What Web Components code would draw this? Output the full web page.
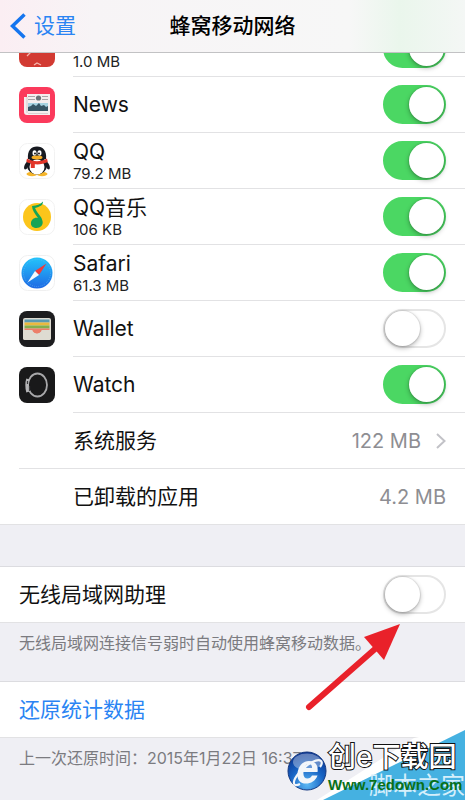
<!DOCTYPE html>
<html lang="zh-CN">
<head>
<meta charset="utf-8">
<meta name="viewport" content="width=device-width, initial-scale=1">
<title>蜂窝移动网络</title>
<style>
  html, body { margin: 0; height: 100%; }
  body {
    background: #efeff4;
    color: #111;
    font-family: Inter, "Noto Sans CJK SC", sans-serif;
    overflow: hidden;
  }
</style>
</head>
<body>
<settings-page></settings-page>

<script>
const ICONS = {
  red: `<rect width="36" height="36" rx="8" fill="#d23a32"/>
    <path d="M8 25l6-6M15 34l3-2 4 2" fill="none" stroke="#f6b5ac" stroke-width="1.3"/>`,
  news: `<rect width="36" height="36" rx="8" fill="#fb3a5c"/>
    <path d="M5 10h3V7h23v21H8c-2 0-3-1-3-3z" fill="#f4eeee"/>
    <path d="M8 10v16" stroke="#d8c9cd"/>
    <path d="M9 9.500h7M9 12.500h7M23 9.500h6M23 12.500h6" stroke="#a9a4a6"/>
    <circle cx="19.500" cy="11" r="2.600" fill="#6c7377"/>
    <rect x="9" y="16" width="20" height="8" fill="#a5d2e0"/>
    <path d="M9 24v-4l3-1 2-2 3 2 3-3 2 3 3-1 2 2 2-1v5z" fill="#365564"/>
    <path d="M9 26.500h20" stroke="#d8cfd1"/>`,
  qq: `<rect x=".5" y=".5" width="35" height="35" rx="8" fill="#fff" stroke="#f2f2f2"/>
    <ellipse cx="13" cy="31" rx="5.500" ry="2.200" fill="#f5b52b"/>
    <ellipse cx="23" cy="31" rx="5.500" ry="2.200" fill="#f5b52b"/>
    <path d="M9.500 17C4 22 4 28 7.500 26l3-4zM26.500 17C32 22 32 28 28.500 26l-3-4z" fill="#171a20"/>
    <ellipse cx="18" cy="22.500" rx="10" ry="9" fill="#171a20"/>
    <ellipse cx="18" cy="24" rx="7.500" ry="7.500" fill="#fff"/>
    <path d="M9 16C8 8 12 3.500 18 3.500S28 8 27 16z" fill="#171a20"/>
    <ellipse cx="15.500" cy="10" rx="2" ry="2.800" fill="#fff"/>
    <ellipse cx="20.500" cy="10" rx="2" ry="2.800" fill="#fff"/>
    <circle cx="16" cy="10.500" r=".9"/><circle cx="20" cy="10.500" r=".9"/>
    <ellipse cx="18" cy="14.500" rx="5.500" ry="1.900" fill="#f5ad24"/>
    <path d="M8 15.500c6 3.500 14 3.500 20 0l.8 3.500c-4 2-9 2.800-13 2.300V25h-4v-4.500C10 20 8 19.500 7.300 18.500z" fill="#e23629"/>`,
  music: `<rect x=".5" y=".5" width="35" height="35" rx="8" fill="#fff" stroke="#f2f2f2"/>
    <circle cx="18" cy="18" r="14" fill="#fcc51b"/>
    <path d="M24 2.500c0 4-3 5-8 6.500 1 3 4 6 6.500 10l1 3c1 4-2 7-6 7s-6-2.500-5.500-5.500S15.500 18 19 19c-3-4-6-8-6-12 5-.5 8-1.500 11-4.500z" fill="#13a456"/>`,
  safari: `<defs><linearGradient id="sea" x1="0" y1="0" x2="0" y2="1"><stop stop-color="#24c4fb"/><stop offset="1" stop-color="#1e69e4"/></linearGradient></defs>
    <rect x=".5" y=".5" width="35" height="35" rx="8" fill="#fff" stroke="#f0f0f0"/>
    <circle cx="18" cy="18" r="15.500" fill="url(#sea)"/>
    <circle cx="18" cy="18" r="13.500" fill="none" stroke="#6fc0f8" stroke-width="1" stroke-dasharray=".5 1.600"/>
    <path d="M27.500 8.500L16 16l4 4z" fill="#ef3b3b"/>
    <path d="M8.500 27.500L16 16l4 4z" fill="#f6f8fb"/>`,
  wallet: `<rect width="36" height="36" rx="8" fill="#1d1d1f"/>
    <rect x="4" y="7" width="28" height="22" rx="2" fill="#dedbd1"/>
    <path d="M5.500 10h25" stroke="#5a9ab2" stroke-width="3"/>
    <path d="M5.500 13h25" stroke="#eab93e" stroke-width="3"/>
    <path d="M5.500 16h25" stroke="#83b04c" stroke-width="3"/>
    <path d="M5.500 17.500h25v2h-7c-2 0-2 3.500-5.500 3.500s-3.500-3.500-5.500-3.500h-7z" fill="#ec7f6a"/>
    <path d="M4 19h8.500c2 0 2 3.500 5.500 3.500s3.500-3.500 5.500-3.500H32v8c0 1-1 2-2 2H6c-1 0-2-1-2-2z" fill="#dedbd1"/>
    <path d="M13.500 19.500h9c-1 3.500-8 3.500-9 0z" fill="#ec7f6a"/>`,
  watch: `<rect width="36" height="36" rx="8" fill="#19191a"/>
    <ellipse cx="18.500" cy="18" rx="9.500" ry="11.500" fill="none" stroke="#a8a8aa" stroke-width="1.800"/>
    <path d="M9 12c-1 3-1 9 0 13" fill="none" stroke="#b5b5b7" stroke-width="3.500"/>
    <path d="M8.500 14v3M10.500 19v5" stroke="#3a3a3c" stroke-width="1.200"/>`
};

class AppIcon extends HTMLElement {
  constructor() {
    super();
    this.attachShadow({ mode: 'open' });
  }

  connectedCallback() {
    this.shadowRoot.innerHTML = `
      <style>
        :host { display: block; width: 36px; height: 36px; }
        svg { display: block; }
      </style>
      <svg width="36" height="36" viewBox="0 0 36 36" aria-hidden="true">${ICONS[this.getAttribute('name')]}</svg>
    `;
  }
}
customElements.define('app-icon', AppIcon);

class NavHeader extends HTMLElement {
  constructor() {
    super();
    this.attachShadow({ mode: 'open' });
  }

  connectedCallback() {
    this.shadowRoot.innerHTML = `
      <style>
        :host {
          display: grid;
          grid-template-columns: 1fr auto 1fr;
          align-items: center;
          box-sizing: border-box;
          height: 53px;
          padding: 0 10px;
          position: relative;
          z-index: 1;
          border-bottom: 1px solid #c2c2c4;
          background: linear-gradient(90deg, #fbeef3 0, #f7f4f6 20%, #f7f7f7 75%, #eaf6ec 86%, #f4f7f5 100%);
        }
        a {
          display: flex;
          align-items: center;
          gap: 8px;
          color: #2a84f3;
          font-size: 21px;
          line-height: 28px;
          text-decoration: none;
        }
        h1 { margin: 0; font-size: 21px; line-height: 28px; font-weight: 500; color: #000; }
      </style>
      <a href="#"><svg width="16" height="26" viewBox="0 0 16 26" aria-hidden="true"><path d="M14.500 1.500L2.500 13l12 11.500" fill="none" stroke="#1575ef" stroke-width="3.500"/></svg><slot name="back"></slot></a>
      <h1><slot></slot></h1>
    `;
  }
}
customElements.define('nav-header', NavHeader);

class SettingsGroup extends HTMLElement {
  constructor() {
    super();
    this.attachShadow({ mode: 'open' });
  }

  connectedCallback() {
    this.shadowRoot.innerHTML = `
      <style>
        :host { display: block; }
        .rows { background: #fff; box-shadow: 0 -1px #dcdce0; }
        ::slotted(p) {
          margin: 0;
          padding: 8px 19px 27px;
          font-size: 16px;
          line-height: 24px;
          color: #7b7b80;
          white-space: nowrap;
        }
      </style>
      <div class="rows"><slot></slot></div>
      <slot name="note"></slot>
    `;
  }
}
customElements.define('settings-group', SettingsGroup);

class SettingsRow extends HTMLElement {
  constructor() {
    super();
    this.attachShadow({ mode: 'open' });
  }

  // kind: toggle | value | link | action
  control() {
    const kind = this.getAttribute('kind') || 'toggle';
    if (kind === 'toggle') {
      return `<input id="sw" type="checkbox" role="switch" ${this.hasAttribute('on') ? 'checked' : ''}>`;
    }
    if (kind === 'action') return '';
    const arrow = kind === 'link'
      ? `<svg width="10" height="16" viewBox="0 0 10 16" aria-hidden="true"><path d="M1 1l7.500 7L1 15" fill="none" stroke="#c2c2c7" stroke-width="2"/></svg>`
      : '';
    return `<span class="value">${this.getAttribute('value')}${arrow}</span>`;
  }

  text() {
    const kind = this.getAttribute('kind') || 'toggle';
    const sub = this.getAttribute('sub');
    const inner = `<span class="name"><slot></slot></span>${sub ? `<span class="sub">${sub}</span>` : ''}`;
    if (kind === 'toggle') return `<label class="text" for="sw">${inner}</label>`;
    if (kind === 'action') return `<button class="text">${inner}</button>`;
    if (kind === 'link') return `<a class="text" href="#">${inner}</a>`;
    return `<div class="text">${inner}</div>`;
  }

  connectedCallback() {
    this.shadowRoot.innerHTML = `
      <style>
        :host { display: flex; height: 56px; padding-left: 19px; }
        .icon { width: 54px; flex: none; display: flex; align-items: center; }
        :host([plain]) .icon { display: none; }
        .main {
          flex: 1;
          display: flex;
          align-items: center;
          box-sizing: border-box;
          padding-right: 19px;
          border-bottom: 1px solid #e2e2e4;
        }
        :host([wide]) .icon { box-sizing: border-box; border-bottom: 1px solid #e2e2e4; }
        :host([last]) { padding-left: 0; }
        :host([last]) .icon { width: 73px; box-sizing: border-box; border-bottom: 1px solid #e2e2e4; }
        :host([last][plain]) .main { padding-left: 19px; }
        .text {
          flex: 1;
          display: flex;
          flex-direction: column;
          border: 0;
          padding: 0;
          background: none;
          font: inherit;
          text-align: left;
          text-decoration: none;
          color: inherit;
        }
        :host([sub]) .text { padding-top: 2px; }
        button.text { color: #2a84f3; }
        .name { font-size: 21px; line-height: 24px; }
        .sub { font-size: 15px; line-height: 20px; color: #222; }
        .value { display: flex; align-items: center; gap: 15px; font-size: 20px; color: #8e8e93; }
        input {
          appearance: none;
          flex: none;
          box-sizing: border-box;
          width: 63px;
          height: 39px;
          margin: 0;
          border: 2px solid #e5e5e5;
          border-radius: 20px;
          background: #fff;
          display: flex;
        }
        input::before {
          content: "";
          width: 35px;
          height: 35px;
          border-radius: 50%;
          background: #fff;
          box-shadow: 0 2px 5px rgba(0,0,0,.3), 0 0 1px 1px rgba(0,0,0,.08);
        }
        input:checked { background: #4bd763; border-color: #4bd763; justify-content: flex-end; }
      </style>
      <div class="icon"><slot name="icon"></slot></div>
      <div class="main">${this.text()}${this.control()}</div>
    `;
  }
}
customElements.define('settings-row', SettingsRow);

// red pointer laid over the switch
class PointerArrow extends HTMLElement {
  constructor() {
    super();
    this.attachShadow({ mode: 'open' });
  }

  connectedCallback() {
    this.shadowRoot.innerHTML = `
      <style>
        :host { display: block; position: absolute; right: 64px; top: 624px; z-index: 2; pointer-events: none; }
        svg { display: block; }
      </style>
      <svg width="96" height="88" viewBox="0 0 96 88" aria-hidden="true">
        <path d="M4 83L70 25" stroke="#e9212a" stroke-width="6" stroke-linecap="round"/>
        <path d="M95 0L59 13l20 23z" fill="#e9212a"/>
      </svg>
    `;
  }
}
customElements.define('pointer-arrow', PointerArrow);

class SiteMark extends HTMLElement {
  constructor() {
    super();
    this.attachShadow({ mode: 'open' });
  }

  connectedCallback() {
    this.shadowRoot.innerHTML = `
      <style>
        :host { display: block; position: absolute; right: 0; bottom: 0; width: 178px; height: 72px; z-index: 3; overflow: hidden; }
        svg { position: absolute; left: 0; top: 0; }
        .under { position: absolute; right: 0; bottom: 0; font-size: 24px; line-height: 28px; color: #d5effb; white-space: nowrap; }
        .brand { position: absolute; left: 41px; top: 10px; display: flex; flex-direction: column; }
        .title {
          font-size: 28px;
          line-height: 38px;
          font-weight: 500;
          color: #fff;
          -webkit-text-stroke: 2px #111;
          paint-order: stroke fill;
          white-space: nowrap;
        }
        .url {
          font: bold 15px/18px "Liberation Sans", sans-serif;
          color: #087018;
          white-space: nowrap;
        }
      </style>
      <svg width="178" height="72" viewBox="0 0 178 72" aria-hidden="true">
        <defs><radialGradient id="orb" cx=".5" cy=".85" r=".9"><stop stop-color="#5cb8f4"/><stop offset=".5" stop-color="#1763c4"/><stop offset="1" stop-color="#0a2e88"/></radialGradient></defs>
        <path d="M127 10L30 72h148V0z" fill="#fff"/>
        <path d="M178 2L36 72h142z" fill="#45b1e1"/>
      </svg>
      <span class="under">脚本之家</span>
      <svg width="42" height="72" viewBox="0 0 42 72" aria-hidden="true">
        <circle cx="20" cy="43" r="19" fill="url(#orb)" stroke="#12367f"/>
        <ellipse cx="20" cy="34" rx="14" ry="8.500" fill="#fff" opacity=".35"/>
        <path d="M30.500 47.500c-2 5.500-6.500 8-11.500 8-6 0-9-4-8.500-9.500C11 38 16 33 22 33c6.500 0 9.500 4.500 8.500 11H16.500c-.5 4 1 6.500 4 6.500 2 0 3.500-1 4.500-3zM17.500 40h7.500c.3-2.500-1-4-3.300-4-2.200 0-3.700 1.500-4.200 4z" fill="#f3f6fa" fill-rule="evenodd"/>
        <path d="M12 45C5 53 5 60 13 56M14 43c7-8 17-13 20-10 1.500 1.500.5 4-1 6" fill="none" stroke="#f3f6fa" stroke-width="2.200"/>
      </svg>
      <div class="brand"><span class="title">创e下载园</span><span class="url">Www.7edown.Com</span></div>
    `;
  }
}
customElements.define('site-mark', SiteMark);

class SettingsPage extends HTMLElement {
  constructor() {
    super();
    this.attachShadow({ mode: 'open' });
  }

  connectedCallback() {
    this.shadowRoot.innerHTML = `
      <style>
        :host { display: flex; flex-direction: column; height: 100%; position: relative; overflow: hidden; }
        /* the list is scrolled part of a row under the header */
        main { display: flex; flex-direction: column; margin-top: -32px; }
        .apps { margin-bottom: 42px; }
      </style>
      <nav-header><span slot="back">设置</span>蜂窝移动网络</nav-header>
      <main>
        <settings-group class="apps">
          <settings-row sub="1.0 MB" on><app-icon slot="icon" name="red"></app-icon>&nbsp;</settings-row>
          <settings-row on><app-icon slot="icon" name="news"></app-icon>News</settings-row>
          <settings-row sub="79.2 MB" on><app-icon slot="icon" name="qq"></app-icon>QQ</settings-row>
          <settings-row sub="106 KB" on><app-icon slot="icon" name="music"></app-icon>QQ音乐</settings-row>
          <settings-row sub="61.3 MB" on><app-icon slot="icon" name="safari"></app-icon>Safari</settings-row>
          <settings-row><app-icon slot="icon" name="wallet"></app-icon>Wallet</settings-row>
          <settings-row on><app-icon slot="icon" name="watch"></app-icon>Watch</settings-row>
          <settings-row wide kind="link" value="122 MB">系统服务</settings-row>
          <settings-row last kind="value" value="4.2 MB">已卸载的应用</settings-row>
        </settings-group>
        <settings-group>
          <settings-row last plain>无线局域网助理</settings-row>
          <p slot="note">无线局域网连接信号弱时自动使用蜂窝移动数据。</p>
        </settings-group>
        <settings-group>
          <settings-row last plain kind="action">还原统计数据</settings-row>
          <p slot="note">上一次还原时间：2015年1月22日 16:37</p>
        </settings-group>
      </main>
      <pointer-arrow></pointer-arrow>
      <site-mark></site-mark>
    `;
  }
}
customElements.define('settings-page', SettingsPage);
</script>
</body>
</html>
